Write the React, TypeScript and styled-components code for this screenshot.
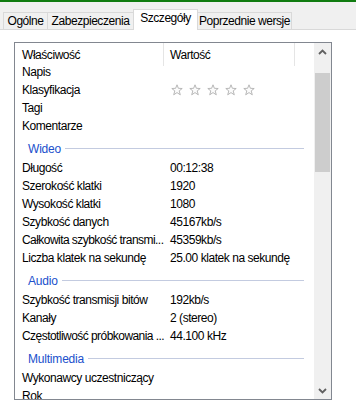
import React from "react";
import styled, { createGlobalStyle } from "styled-components";

const GlobalStyle = createGlobalStyle`
  html, body { margin: 0; padding: 0; background: #ffffff; }
  body {
    font-family: "Liberation Sans", Arial, sans-serif;
    font-size: 12px;
    letter-spacing: -0.45px;
    color: #000000;
  }
  * { box-sizing: border-box; }
`;

const Window = styled.div`
  width: 356px;
  height: 411px;
  overflow: hidden;
  background: #ffffff;
  display: flex;
  flex-direction: column;
`;

const Accent = styled.div`
  height: 2px;
  background: #107c10;
  flex: none;
`;

const TabStrip = styled.div`
  height: 28px;
  flex: none;
  background: #f0f0f0;
  border-bottom: 1px solid #d9d9d9;
  display: flex;
  align-items: flex-end;
  padding-left: 3px;
`;

const Tab = styled.div<{ $w: number; $active?: boolean }>`
  position: relative;
  width: ${(p) => p.$w}px;
  height: ${(p) => (p.$active ? 21 : 17)}px;
  margin-left: -1px;
  margin-bottom: ${(p) => (p.$active ? -1 : 0)}px;
  &:first-child { margin-left: 0; }
  border: 1px solid #d9d9d9;
  border-bottom: none;
  background: ${(p) => (p.$active ? "#ffffff" : "#f0f0f0")};
  z-index: ${(p) => (p.$active ? 2 : 1)};
  display: flex;
  justify-content: center;
  align-items: flex-start;
  line-height: 16px;
  white-space: nowrap;
`;

const Panel = styled.div`
  flex: 1;
  background: #ffffff;
  padding: 12px 0 0 14px;
`;

const ListBox = styled.div`
  width: 318px;
  height: 358px;
  border: 1px solid #828790;
  display: flex;
  overflow: hidden;
`;

const ListContent = styled.div`
  flex: 1;
  overflow: hidden;
  display: flex;
  flex-direction: column;
`;

const HeaderRow = styled.div`
  height: 20px;
  flex: none;
  display: flex;
  align-items: flex-start;
`;

const HeaderCell = styled.div<{ $w?: number; $first?: boolean }>`
  width: ${(p) => (p.$w ? `${p.$w}px` : "auto")};
  flex: ${(p) => (p.$w ? "none" : "1")};
  height: 23px;
  padding: 4px 0 0 ${(p) => (p.$first ? 7 : 6)}px;
  line-height: 16px;
  border-right: ${(p) => (p.$w ? "1px solid #e5e5e5" : "none")};
  white-space: nowrap;
`;

const Row = styled.div`
  height: 18px;
  flex: none;
  display: grid;
  grid-template-columns: 149px 1fr;
  align-items: center;
  line-height: 18px;
`;

const NameCell = styled.div<{ $cut?: boolean }>`
  padding-left: 7px;
  white-space: nowrap;
  letter-spacing: ${(p) => (p.$cut ? "-0.55px" : "inherit")};
`;

const ValueCell = styled.div`
  padding-left: 6px;
  white-space: nowrap;
  overflow: hidden;
  display: flex;
  align-items: center;
`;

const GroupRow = styled.div`
  height: 24px;
  flex: none;
  display: flex;
  align-items: center;
  padding: 3px 10px 0 13px;
  line-height: 18px;
`;

const GroupTitle = styled.span`
  color: #2050cc;
  white-space: nowrap;
  letter-spacing: -0.2px;
`;

const GroupLine = styled.div`
  flex: 1;
  height: 1px;
  margin-left: 4px;
  background: #c3cbe0;
`;

const Stars = styled.div`
  display: flex;
  gap: 6px;
  margin-left: 1px;
`;

const ScrollBar = styled.div`
  width: 17px;
  flex: none;
  background: #f0f0f0;
  display: flex;
  flex-direction: column;
`;

const ArrowButton = styled.div`
  height: 17px;
  flex: none;
  display: flex;
  align-items: center;
  justify-content: center;
`;

const Track = styled.div`
  flex: 1;
  padding: 13px 1px 0 1px;
`;

const Thumb = styled.div`
  height: 99px;
  background: #cdcdcd;
`;

const Star = () => (
  <svg width="12" height="12" viewBox="0 0 12 12">
    <path
      d="M6 0.8 L7.4 4.3 L11.2 4.5 L8.2 6.9 L9.3 10.8 L6 8.6 L2.7 10.8 L3.8 6.9 L0.8 4.5 L4.6 4.3 Z"
      fill="#fbfbfb"
      stroke="#b0b0b0"
      strokeWidth="0.9"
      strokeLinejoin="round"
    />
  </svg>
);

const Chevron = ({ up }: { up?: boolean }) => (
  <svg width="9" height="6" viewBox="0 0 9 6">
    <path
      d={up ? "M1 5 L4.5 1.5 L8 5" : "M1 1 L4.5 4.5 L8 1"}
      fill="none"
      stroke="#606060"
      strokeWidth="1.8"
    />
  </svg>
);

type Item =
  | { kind: "item"; name: string; value?: string; stars?: boolean; cut?: boolean }
  | { kind: "group"; title: string };

const items: Item[] = [
  { kind: "item", name: "Napis" },
  { kind: "item", name: "Klasyfikacja", stars: true },
  { kind: "item", name: "Tagi" },
  { kind: "item", name: "Komentarze" },
  { kind: "group", title: "Wideo" },
  { kind: "item", name: "Długość", value: "00:12:38" },
  { kind: "item", name: "Szerokość klatki", value: "1920" },
  { kind: "item", name: "Wysokość klatki", value: "1080" },
  { kind: "item", name: "Szybkość danych", value: "45167kb/s" },
  { kind: "item", name: "Całkowita szybkość transmi...", value: "45359kb/s", cut: true },
  { kind: "item", name: "Liczba klatek na sekundę", value: "25.00 klatek na sekundę" },
  { kind: "group", title: "Audio" },
  { kind: "item", name: "Szybkość transmisji bitów", value: "192kb/s" },
  { kind: "item", name: "Kanały", value: "2 (stereo)" },
  { kind: "item", name: "Częstotliwość próbkowania ...", value: "44.100 kHz", cut: true },
  { kind: "group", title: "Multimedia" },
  { kind: "item", name: "Wykonawcy uczestniczący" },
  { kind: "item", name: "Rok" },
];

export default function App() {
  return (
    <>
      <GlobalStyle />
      <Window>
        <Accent />
        <TabStrip>
          <Tab $w={45}>Ogólne</Tab>
          <Tab $w={87}>Zabezpieczenia</Tab>
          <Tab $w={65} $active>
            Szczegóły
          </Tab>
          <Tab $w={95}>Poprzednie wersje</Tab>
        </TabStrip>
        <Panel>
          <ListBox>
            <ListContent>
              <HeaderRow>
                <HeaderCell $w={149} $first>
                  Właściwość
                </HeaderCell>
                <HeaderCell $w={131}>Wartość</HeaderCell>
                <HeaderCell />
              </HeaderRow>
              {items.map((it, i) =>
                it.kind === "group" ? (
                  <GroupRow key={i}>
                    <GroupTitle>{it.title}</GroupTitle>
                    <GroupLine />
                  </GroupRow>
                ) : (
                  <Row key={i}>
                    <NameCell $cut={it.cut}>{it.name}</NameCell>
                    <ValueCell>
                      {it.stars ? (
                        <Stars>
                          <Star />
                          <Star />
                          <Star />
                          <Star />
                          <Star />
                        </Stars>
                      ) : (
                        it.value
                      )}
                    </ValueCell>
                  </Row>
                )
              )}
            </ListContent>
            <ScrollBar>
              <ArrowButton>
                <Chevron up />
              </ArrowButton>
              <Track>
                <Thumb />
              </Track>
              <ArrowButton>
                <Chevron />
              </ArrowButton>
            </ScrollBar>
          </ListBox>
        </Panel>
      </Window>
    </>
  );
}
